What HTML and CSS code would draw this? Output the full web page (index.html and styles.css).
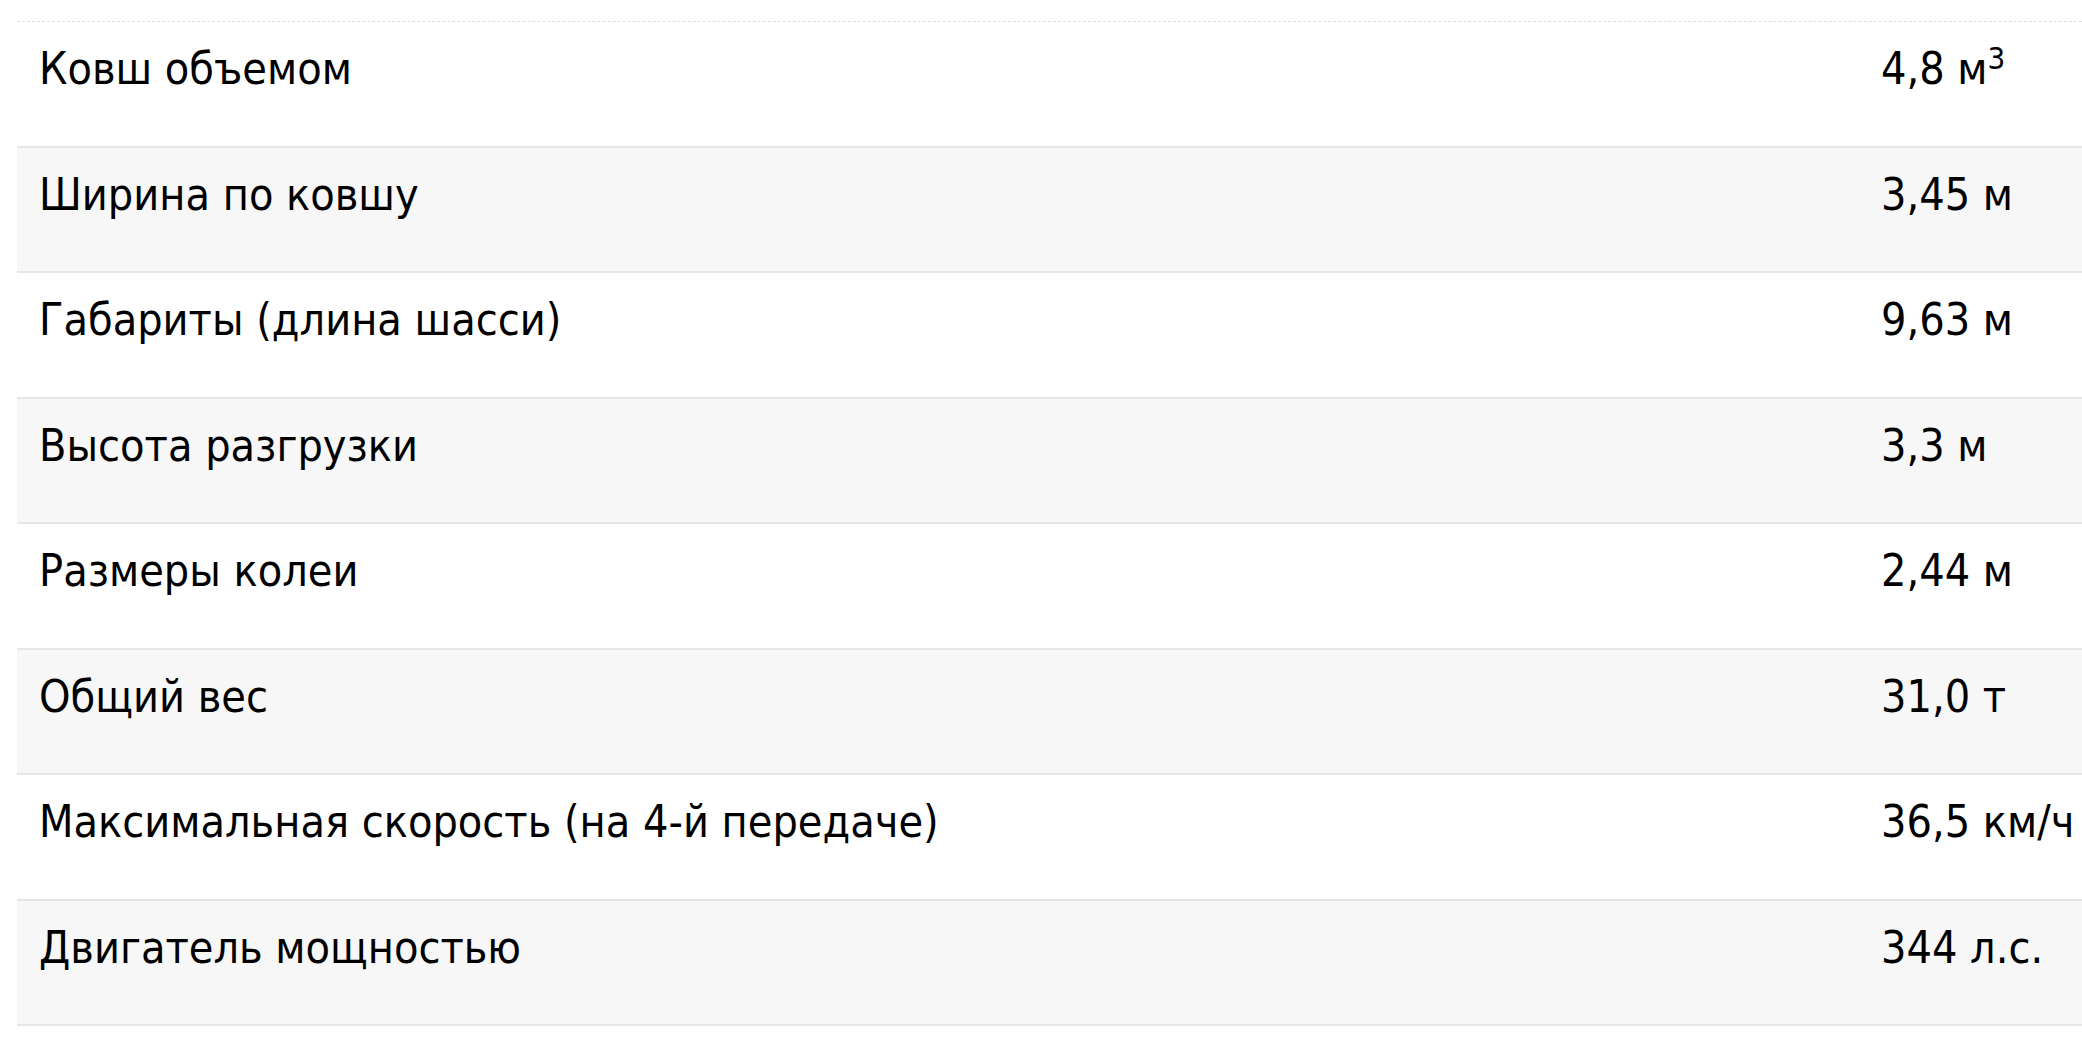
FILE: index.html
```html
<!DOCTYPE html>
<html lang="ru">
<head>
<meta charset="utf-8">
<title>Характеристики</title>
<link rel="stylesheet" href="styles.css">
</head>
<body>
<div class="specs">
  <div class="row"><div class="name">Ковш объемом</div><div class="val">4,8 м<sup>3</sup></div></div>
  <div class="row alt"><div class="name">Ширина по ковшу</div><div class="val">3,45 м</div></div>
  <div class="row"><div class="name">Габариты (длина шасси)</div><div class="val">9,63 м</div></div>
  <div class="row alt"><div class="name">Высота разгрузки</div><div class="val">3,3 м</div></div>
  <div class="row"><div class="name">Размеры колеи</div><div class="val">2,44 м</div></div>
  <div class="row alt"><div class="name">Общий вес</div><div class="val">31,0 т</div></div>
  <div class="row"><div class="name">Максимальная скорость (на 4-й передаче)</div><div class="val">36,5 км/ч</div></div>
  <div class="row alt"><div class="name">Двигатель мощностью</div><div class="val">344 л.с.</div></div>
</div>
</body>
</html>
```

FILE: styles.css
```css
html, body {
  margin: 0;
  padding: 0;
  background: #ffffff;
  overflow: hidden;
}
body {
  padding: 21px 0 0 17px;
  font-family: "DejaVu Sans Condensed", "DejaVu Sans", sans-serif;
  font-stretch: condensed;
  color: #000;
}
.specs {
  width: 2300px;
  border-top: 1px dashed #dedede;
}
.row {
  display: grid;
  grid-template-columns: 1864px 1fr;
  height: 123.5px;
  border-bottom: 2px solid #e6e6e6;
  font-size: 44.5px;
  line-height: 1;
}
.row.alt {
  background-color: #f7f7f7;
}
.name {
  padding: 25px 0 0 22px;
}
.val {
  padding-top: 25px;
}
.val sup {
  font-size: 31px;
  vertical-align: 0;
  position: relative;
  top: -15px;
}
```
